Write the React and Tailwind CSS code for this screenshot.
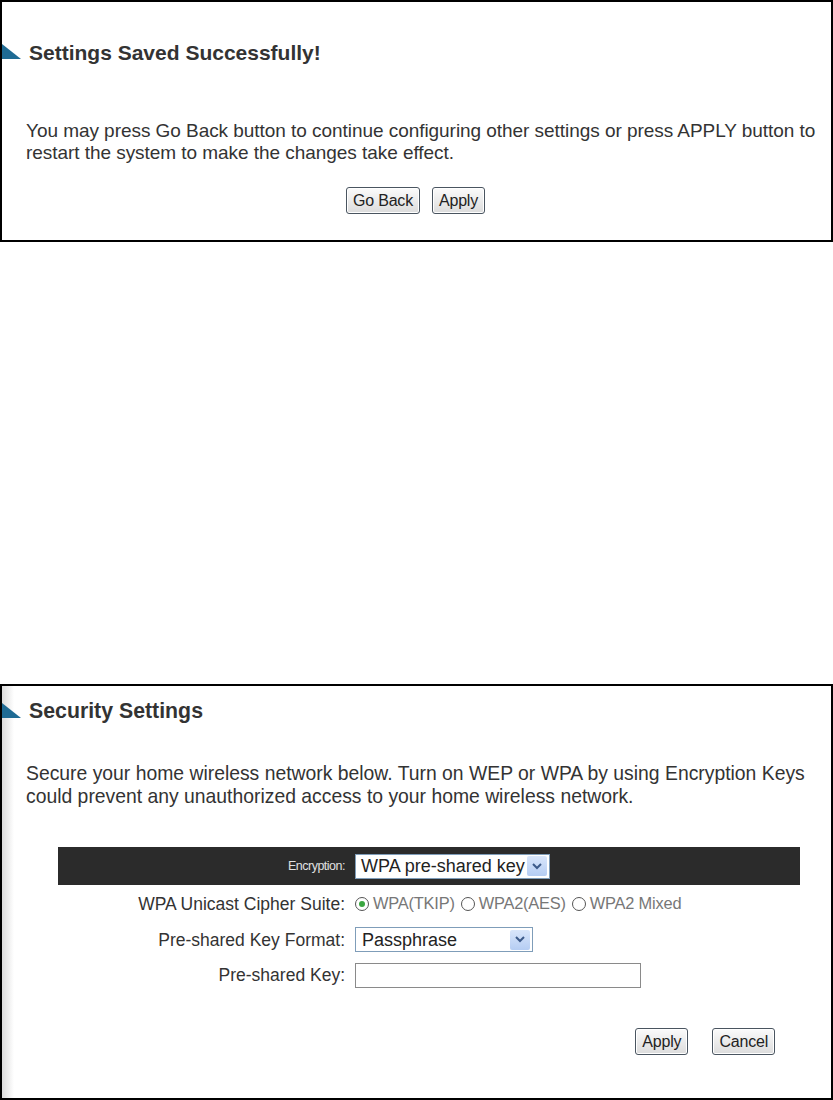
import React from "react";

const Tri = () => (
  <svg width="19" height="15" viewBox="0 0 19 15" className="shrink-0 mt-[2px]">
    <polygon points="0,0 19,15 0,15" fill="#1f6b94" />
  </svg>
);

const Btn = ({ children, className = "" }) => (
  <button
    className={
      "h-[27px] px-[6px] rounded-[3px] border border-[#4a5560] bg-gradient-to-b from-[#fbfbfb] to-[#dcdcdc] text-[16px] leading-none text-[#222] tracking-[-0.2px] shadow-[inset_0_0_0_1px_#fff] " +
      className
    }
  >
    {children}
  </button>
);

const Arrow = () => (
  <span className="flex h-[20px] w-[20px] items-center justify-center rounded-[2px] bg-gradient-to-b from-[#d9e6fb] to-[#b5cdf3]">
    <svg width="10" height="7" viewBox="0 0 10 7">
      <path d="M1 1 L5 5 L9 1" fill="none" stroke="#3c5a8a" strokeWidth="2" />
    </svg>
  </span>
);

const Radio = ({ checked, label }) => (
  <span className="flex items-center gap-[4px] mr-[6px]">
    <span className="flex h-[14px] w-[14px] items-center justify-center rounded-full border border-[#555] bg-white">
      {checked && <span className="h-[6px] w-[6px] rounded-full bg-[#3aa640]" />}
    </span>
    <span className="text-[16.4px] text-[#777] tracking-[-0.2px]">{label}</span>
  </span>
);

export default function App() {
  return (
    <div
      className="w-[833px] h-[1100px] bg-white flex flex-col"
      style={{ fontFamily: '"Liberation Sans", Arial, sans-serif' }}
    >
      {/* Top box */}
      <div className="h-[242px] border-2 border-black flex flex-col">
        <div className="flex items-start gap-[8px] mt-[40px]">
          <Tri />
          <h1 className="text-[21px] font-bold text-[#333] leading-none">
            Settings Saved Successfully!
          </h1>
        </div>
        <p className="mt-[57px] ml-[24px] text-[19px] leading-[22px] text-[#333] tracking-[-0.05px]">
          You may press Go Back button to continue configuring other settings or press APPLY button to
          <br />
          restart the system to make the changes take effect.
        </p>
        <div className="mt-[23px] flex justify-center gap-[12px] pr-[2px]">
          <Btn>Go Back</Btn>
          <Btn>Apply</Btn>
        </div>
      </div>

      <div className="h-[442px]" />

      {/* Bottom box */}
      <div className="flex-1 border-2 border-black flex bg-gradient-to-r from-[#dcdcdc] via-white to-white bg-[length:24px_100%] bg-no-repeat">
        <div className="flex flex-col w-full">
          <div className="flex items-start gap-[8px] mt-[15px]">
            <Tri />
            <h1 className="text-[21.3px] font-bold text-[#333] leading-none">Security Settings</h1>
          </div>
          <p className="mt-[40px] ml-[24px] text-[19.35px] leading-[23px] text-[#333]">
            Secure your home wireless network below. Turn on WEP or WPA by using Encryption Keys
            <br />
            could prevent any unauthorized access to your home wireless network.
          </p>

          <div className="mt-[39px] ml-[56px] w-[742px] flex flex-col">
            <div className="h-[38px] bg-[#2b2b2b] flex items-center">
              <span className="w-[287px] text-right text-[12.5px] text-[#e0e0e0] tracking-[-0.5px]">Encryption:</span>
              <span className="ml-[10px] flex items-center h-[25px] w-[195px] bg-white border border-[#7f9db9] pl-[5px] pr-[2px] justify-between">
                <span className="text-[18px] text-[#222] leading-none">WPA pre-shared key</span>
                <Arrow />
              </span>
            </div>
            <div className="h-[37px] flex items-center">
              <span className="w-[287px] text-right text-[17.5px] text-[#333]">WPA Unicast Cipher Suite:</span>
              <span className="ml-[10px] flex items-center">
                <Radio checked label="WPA(TKIP)" />
                <Radio label="WPA2(AES)" />
                <Radio label="WPA2 Mixed" />
              </span>
            </div>
            <div className="h-[35px] flex items-center">
              <span className="w-[287px] text-right text-[17.5px] text-[#333]">Pre-shared Key Format:</span>
              <span className="ml-[10px] flex items-center h-[25px] w-[178px] bg-white border border-[#7f9db9] pl-[6px] pr-[2px] justify-between">
                <span className="text-[18px] text-[#222] leading-none">Passphrase</span>
                <Arrow />
              </span>
            </div>
            <div className="h-[36px] flex items-center">
              <span className="w-[287px] text-right text-[17.5px] text-[#333]">Pre-shared Key:</span>
              <span className="ml-[10px] h-[25px] w-[286px] bg-white border border-[#8a8a8a]" />
            </div>
          </div>

          <div className="mt-[35px] flex justify-end gap-[24px] mr-[56px]">
            <Btn>Apply</Btn>
            <Btn>Cancel</Btn>
          </div>
        </div>
      </div>
    </div>
  );
}
